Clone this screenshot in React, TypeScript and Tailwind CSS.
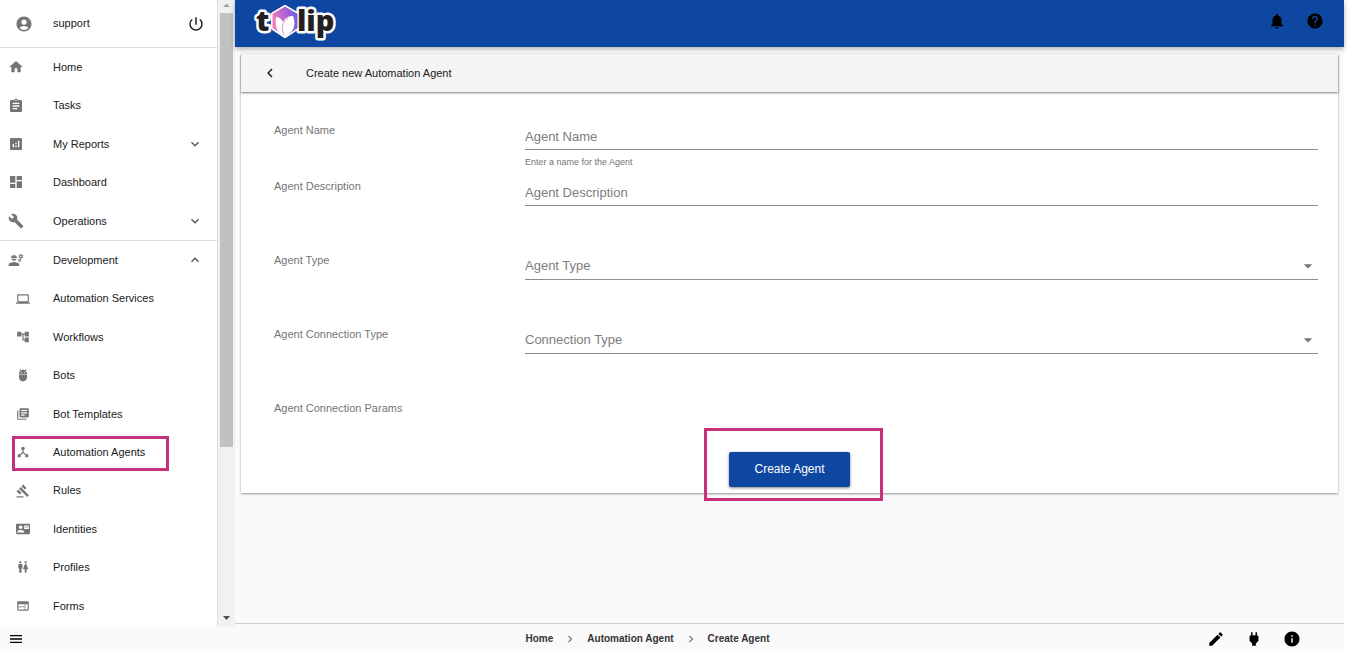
import type { ReactNode } from "react";
import type { IconType } from "react-icons";
import {
  MdAccountCircle,
  MdAccountTree,
  MdAdb,
  MdAnalytics,
  MdArrowDropDown,
  MdAssignment,
  MdBuild,
  MdChevronLeft,
  MdChevronRight,
  MdContactMail,
  MdDashboard,
  MdDeviceHub,
  MdEdit,
  MdEngineering,
  MdExpandLess,
  MdExpandMore,
  MdGavel,
  MdHelp,
  MdHome,
  MdInfo,
  MdLaptop,
  MdLibraryBooks,
  MdMenu,
  MdNotifications,
  MdPower,
  MdPowerSettingsNew,
  MdWc,
  MdWeb,
} from "react-icons/md";

interface NavItem {
  label: string;
  icon: IconType;
  nested?: boolean;
  arrow?: "up" | "down";
  marked?: boolean;
}

const mainItems: NavItem[] = [
  { label: "Home", icon: MdHome },
  { label: "Tasks", icon: MdAssignment },
  { label: "My Reports", icon: MdAnalytics, arrow: "down" },
  { label: "Dashboard", icon: MdDashboard },
  { label: "Operations", icon: MdBuild, arrow: "down" },
];

const devItems: NavItem[] = [
  { label: "Development", icon: MdEngineering, arrow: "up" },
  { label: "Automation Services", icon: MdLaptop, nested: true },
  { label: "Workflows", icon: MdAccountTree, nested: true },
  { label: "Bots", icon: MdAdb, nested: true },
  { label: "Bot Templates", icon: MdLibraryBooks, nested: true },
  { label: "Automation Agents", icon: MdDeviceHub, nested: true, marked: true },
  { label: "Rules", icon: MdGavel, nested: true },
  { label: "Identities", icon: MdContactMail, nested: true },
  { label: "Profiles", icon: MdWc, nested: true },
  { label: "Forms", icon: MdWeb, nested: true },
];

function NavRow({ label, icon: Icon, nested, arrow, marked }: NavItem) {
  return (
    <li className="relative">
      <a href="#" className="flex h-full items-center pr-3.5">
        <span className={`flex w-[53px] ${nested ? "pl-4" : "pl-2"}`}>
          <Icon
            className={nested ? "size-3.5 text-[#757575]" : "size-4 text-[#757575]"}
          />
        </span>
        <span className="flex-1">{label}</span>
        {arrow === "down" && <MdExpandMore className="size-4 text-[#555]" />}
        {arrow === "up" && <MdExpandLess className="size-4 text-[#555]" />}
      </a>
      {marked && (
        <span className="pointer-events-none absolute top-[3px] left-3 h-[35px] w-[157px] border-3 border-[#c7307b]" />
      )}
    </li>
  );
}

function Logo() {
  return (
    <svg viewBox="0 0 84 44" className="h-11 w-[84px]" role="img" aria-label="tulip">
      <defs>
        <linearGradient id="petal" x1="0" y1="0.6" x2="1" y2="0.4">
          <stop offset="0" stopColor="#f77fb4" />
          <stop offset="0.5" stopColor="#b565d3" />
          <stop offset="1" stopColor="#7560e2" />
        </linearGradient>
      </defs>
      <path
        d="M33 7l12 7v14l-12 8-12-8V14z"
        fill="#fff"
        stroke="#fff"
        strokeWidth="4"
        strokeLinejoin="round"
      />
      <g
        fontFamily="Open Sans, sans-serif"
        fontWeight="800"
        fill="#231f20"
        stroke="#fff"
        strokeWidth="5"
        strokeLinejoin="round"
        paintOrder="stroke"
      >
        <text x="4" y="31" fontSize="29">t</text>
        <text x="45" y="31" fontSize="29">lip</text>
      </g>
      <path
        d="M33 7l12 7v14l-12 8-12-8V14z"
        fill="url(#petal)"
        stroke="url(#petal)"
        strokeWidth="1"
        strokeLinejoin="round"
      />
      <path
        d="M24 17c3 0 6 2 7 5 2-4 5-6 10-6 2 5 2 11-1 15l-7 6-7-5c-2-4-3-9-2-15z"
        fill="#fff"
      />
      <path d="M32 35c-3-7-2-13 4-17" fill="none" stroke="#ec86bd" strokeWidth="1" />
    </svg>
  );
}

interface FieldRowProps {
  label: string;
  htmlFor?: string;
  compact?: boolean;
  children?: ReactNode;
}

function FieldRow({ label, htmlFor, compact, children }: FieldRowProps) {
  return (
    <div className={`flex ${compact ? "h-14" : "h-[74px]"}`}>
      <label
        htmlFor={htmlFor}
        className="w-[251px] shrink-0 text-[11px] leading-4 text-[#757575]"
      >
        {label}
      </label>
      <div className="flex-1">{children}</div>
    </div>
  );
}

const controlClass =
  "block h-7 w-full appearance-none rounded-none border-b border-[#8c8c8c] bg-transparent text-[13px] text-[#7d7d7d] outline-none placeholder:text-[#7d7d7d]";

function TextField({ id, placeholder }: { id: string; placeholder: string }) {
  return <input id={id} placeholder={placeholder} className={`${controlClass} pt-0.5`} />;
}

function SelectField({ id, text }: { id: string; text: string }) {
  return (
    <div className="relative">
      <select id={id} className={controlClass}>
        <option>{text}</option>
      </select>
      <MdArrowDropDown className="pointer-events-none absolute top-1 right-0 size-5 text-[#757575]" />
    </div>
  );
}

export default function App() {
  return (
    <div className="flex h-screen flex-col bg-white pr-[18px] pb-[3px] font-['Liberation_Sans',Arial,sans-serif] text-[11px] text-[#212121]">
      <div className="flex min-h-0 flex-1">
        <aside className="flex w-[235px] shrink-0 bg-white">
          <nav className="flex-1 overflow-hidden border-r border-[#dedede]">
            <div className="flex h-12 items-center border-b border-[#dcdcdc] pr-3 pl-[15px]">
              <MdAccountCircle className="size-[18px] text-[#757575]" />
              <span className="flex-1 pl-5">support</span>
              <button aria-label="Log out">
                <MdPowerSettingsNew className="size-[18px]" />
              </button>
            </div>
            <ul className="grid h-48 grid-rows-5">
              {mainItems.map((item) => (
                <NavRow key={item.label} {...item} />
              ))}
            </ul>
            <ul className="grid h-[385px] grid-rows-10 border-t border-[#dcdcdc]">
              {devItems.map((item) => (
                <NavRow key={item.label} {...item} />
              ))}
            </ul>
          </nav>
          {/* scroll track */}
          <div className="flex w-[17px] flex-col items-center bg-[#f1f1f1]">
            <svg viewBox="0 0 17 13" className="h-[13px] w-[17px] shrink-0">
              <path d="M5 7h7L8.500 3.500z" fill="#a3a3a3" />
            </svg>
            <div className="w-[13px] basis-[434px] bg-[#c1c1c1]" />
            <div className="flex-1" />
            <svg viewBox="0 0 17 17" className="h-[17px] w-[17px] shrink-0">
              <path d="M5 6h7L8.500 10z" fill="#505050" />
            </svg>
          </div>
        </aside>

        <div className="flex min-w-0 flex-1 flex-col bg-[#fafafa]">
          <header className="flex h-[47px] shrink-0 items-start justify-between bg-[#0d47a1] pr-5 pl-[17px] shadow-[0_2px_5px_rgba(0,0,0,0.3)]">
            <Logo />
            <div className="flex gap-5 pt-3 text-black">
              <button aria-label="Notifications">
                <MdNotifications className="size-[18px]" />
              </button>
              <button aria-label="Help">
                <MdHelp className="size-[18px]" />
              </button>
            </div>
          </header>

          <main className="flex-1 border-b border-[#cfcfcf] px-1.5 pt-[7px]">
            <section className="bg-white shadow-[0_1px_2px_rgba(0,0,0,0.4)]">
              <div className="flex h-[38px] items-center bg-[#f4f4f4] pl-5 shadow-[0_1px_2px_rgba(0,0,0,0.5)]">
                <button aria-label="Back">
                  <MdChevronLeft className="size-[18px]" />
                </button>
                <h1 className="pl-[27px]">Create new Automation Agent</h1>
              </div>
              <form className="pt-[30px] pr-5 pb-1.5 pl-[33px]">
                <FieldRow label="Agent Name" htmlFor="agent-name" compact>
                  <TextField id="agent-name" placeholder="Agent Name" />
                  <p className="pt-1.5 text-[9px] leading-3 text-[#757575]">
                    Enter a name for the Agent
                  </p>
                </FieldRow>
                <FieldRow label="Agent Description" htmlFor="agent-description">
                  <TextField id="agent-description" placeholder="Agent Description" />
                </FieldRow>
                <FieldRow label="Agent Type" htmlFor="agent-type">
                  <SelectField id="agent-type" text="Agent Type" />
                </FieldRow>
                <FieldRow label="Agent Connection Type" htmlFor="connection-type">
                  <SelectField id="connection-type" text="Connection Type" />
                </FieldRow>
                <p className="h-[52px] leading-4 text-[#757575]">Agent Connection Params</p>
                <div className="flex justify-center pr-[13px]">
                  <div className="relative">
                    <button
                      type="button"
                      className="block h-[35px] w-[121px] rounded-xs bg-[#0d47a1] pb-0.5 text-xs font-medium text-white shadow-[0_1px_3px_rgba(0,0,0,0.5)]"
                    >
                      Create Agent
                    </button>
                    <span className="pointer-events-none absolute -top-6 -right-[33px] -bottom-3.5 -left-[25px] border-3 border-[#c7307b]" />
                  </div>
                </div>
              </form>
            </section>
          </main>
          <div className="h-[3px]" />
        </div>
      </div>

      <footer className="flex h-[25px] shrink-0 items-center bg-[#fafafa] pr-[43px] pb-0.5 pl-2">
        <button aria-label="Menu">
          <MdMenu className="size-4 text-black" />
        </button>
        <nav className="flex flex-1 items-center justify-center gap-2.5 pl-16 text-[10px] font-bold text-[#333]">
          <a href="#">Home</a>
          <MdChevronRight className="size-3.5 text-[#757575]" />
          <a href="#">Automation Agent</a>
          <MdChevronRight className="size-3.5 text-[#757575]" />
          <a href="#">Create Agent</a>
        </nav>
        <div className="flex gap-5 text-black">
          <button aria-label="Edit">
            <MdEdit className="size-[18px]" />
          </button>
          <button aria-label="Connections">
            <MdPower className="size-[18px]" />
          </button>
          <button aria-label="Info">
            <MdInfo className="size-[18px]" />
          </button>
        </div>
      </footer>
    </div>
  );
}
